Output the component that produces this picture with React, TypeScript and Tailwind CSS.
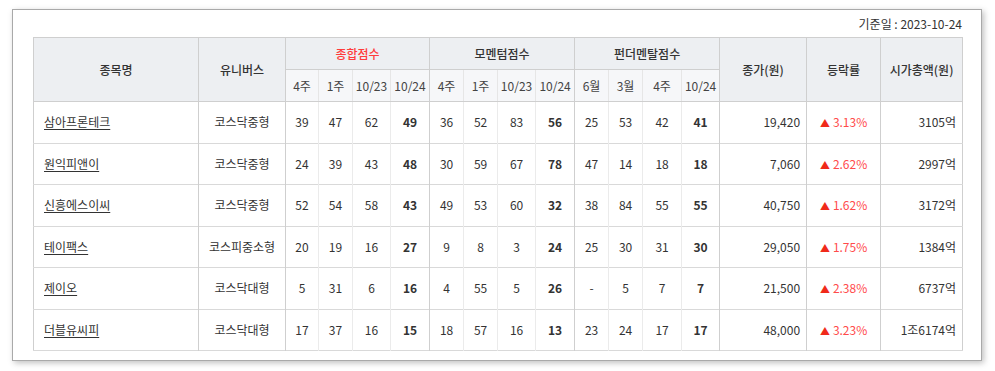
const rows = [
  { name: '삼아프론테크', uni: '코스닥중형', a: [39, 47, 62, 49], m: [36, 52, 83, 56], f: [25, 53, 42, 41], price: '19,420', rate: '3.13%', cap: '3105억' },
  { name: '원익피앤이', uni: '코스닥중형', a: [24, 39, 43, 48], m: [30, 59, 67, 78], f: [47, 14, 18, 18], price: '7,060', rate: '2.62%', cap: '2997억' },
  { name: '신흥에스이씨', uni: '코스닥중형', a: [52, 54, 58, 43], m: [49, 53, 60, 32], f: [38, 84, 55, 55], price: '40,750', rate: '1.62%', cap: '3172억' },
  { name: '테이팩스', uni: '코스피중소형', a: [20, 19, 16, 27], m: [9, 8, 3, 24], f: [25, 30, 31, 30], price: '29,050', rate: '1.75%', cap: '1384억' },
  { name: '제이오', uni: '코스닥대형', a: [5, 31, 6, 16], m: [4, 55, 5, 26], f: ['-', 5, 7, 7], price: '21,500', rate: '2.38%', cap: '6737억' },
  { name: '더블유씨피', uni: '코스닥대형', a: [17, 37, 16, 15], m: [18, 57, 16, 13], f: [23, 24, 17, 17], price: '48,000', rate: '3.23%', cap: '1조6174억' },
];

const widths = [165, 87, 33, 34, 38, 39, 34, 34, 38, 39, 34, 34, 39, 38, 87, 74, 82];

function ScoreCells({ vals }: { vals: (number | string)[] }) {
  return (
    <>
      {vals.map((v, i) => (
        <td
          key={i}
          className={
            'text-center ' +
            (i === 3
              ? 'font-bold border-r border-[#cfcfcf]'
              : 'border-r border-[#ebebeb]')
          }
        >
          {v}
        </td>
      ))}
    </>
  );
}

export default function App() {
  const sub = 'bg-[#f6f7f9] font-normal text-[#444] border-b border-[#cfcfcf]';
  return (
    <div className="w-[995px] h-[371px] bg-white pt-[9px] pl-[12px]" style={{ fontFamily: '"Noto Sans CJK KR", "Noto Sans", sans-serif' }}>
      <div className="w-[970px] h-[352px] border border-[#a9a9a9] bg-white shadow-[2px_2px_6px_rgba(0,0,0,0.25)] pl-[20px] pr-[19px] pt-[5px]">
        <div className="text-right text-[12px] text-[#333] h-[22px] leading-[18px]">기준일 : 2023-10-24</div>
        <table className="table-fixed border-collapse text-[12px] text-[#333] w-[929px] border border-[#cfcfcf]">
          <colgroup>
            {widths.map((w, i) => (
              <col key={i} style={{ width: w }} />
            ))}
          </colgroup>
          <thead>
            <tr className="h-[32px] bg-[#edeff2]">
              <th rowSpan={2} className="font-medium border-r border-b border-[#cfcfcf]">종목명</th>
              <th rowSpan={2} className="font-medium border-r border-b border-[#cfcfcf]">유니버스</th>
              <th colSpan={4} className="font-medium text-[#ff3b3b] border-r border-b border-[#cfcfcf]">종합점수</th>
              <th colSpan={4} className="font-medium border-r border-b border-[#cfcfcf]">모멘텀점수</th>
              <th colSpan={4} className="font-medium border-r border-b border-[#cfcfcf]">펀더멘탈점수</th>
              <th rowSpan={2} className="font-medium border-r border-b border-[#cfcfcf]">종가(원)</th>
              <th rowSpan={2} className="font-medium border-r border-b border-[#cfcfcf]">등락률</th>
              <th rowSpan={2} className="font-medium border-b border-[#cfcfcf]">시가총액(원)</th>
            </tr>
            <tr className="h-[32px]">
              {['4주', '1주', '10/23', '10/24', '4주', '1주', '10/23', '10/24', '6월', '3월', '4주', '10/24'].map((t, i) => (
                <th
                  key={i}
                  className={sub + ' ' + (i % 4 === 3 ? 'border-r border-r-[#cfcfcf]' : 'border-r border-r-[#e6e6e6]')}
                >
                  {t}
                </th>
              ))}
            </tr>
          </thead>
          <tbody>
            {rows.map((r) => (
              <tr key={r.name} className="h-[41.5px] border-b border-[#d9d9d9]">
                <td className="pl-[10px] border-r border-[#cfcfcf]">
                  <span className="underline underline-offset-2">{r.name}</span>
                </td>
                <td className="text-center border-r border-[#cfcfcf]">{r.uni}</td>
                <ScoreCells vals={r.a} />
                <ScoreCells vals={r.m} />
                <ScoreCells vals={r.f} />
                <td className="text-right pr-[6px] border-r border-[#cfcfcf]">{r.price}</td>
                <td className="text-center text-[#ff4b4b] border-r border-[#cfcfcf]">
                  <span className="text-[#f02a1a] text-[10px] mr-[3px]">▲</span>
                  {r.rate}
                </td>
                <td className="text-right pr-[6px]">{r.cap}</td>
              </tr>
            ))}
          </tbody>
        </table>
      </div>
    </div>
  );
}
